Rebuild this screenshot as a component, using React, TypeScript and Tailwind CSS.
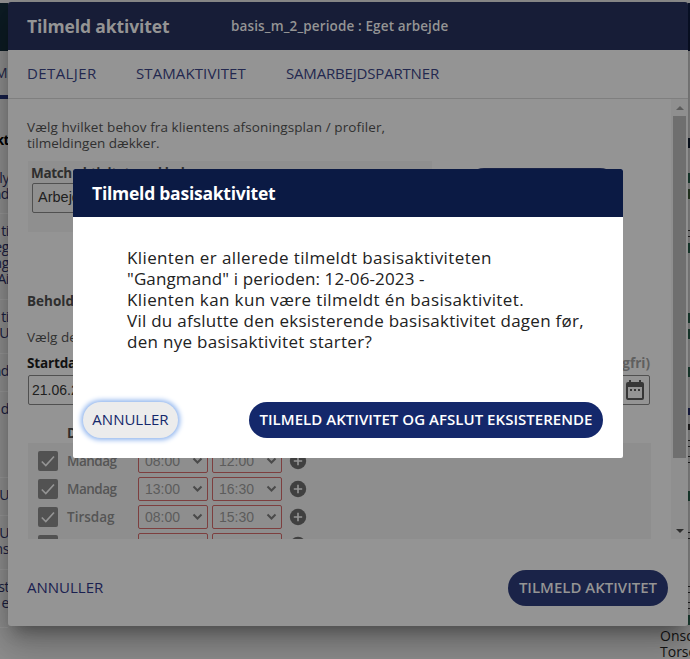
import React from 'react';

const trebuchet = "font-['Trebuchet_MS','Open_Sans','Noto_Sans',sans-serif]";

const tableRows = [
  { h: 'h-[53px]', lines: ['ly', 'nd'] },
  { h: 'h-[86px]', lines: ['ti', 'eg', 'ng', 'Ai'] },
  { h: 'h-[54px]', lines: ['ti', '/U'] },
  { h: 'h-[38px]', lines: ['nd'] },
  { h: 'h-[86px]', lines: ['d'] },
  { h: 'h-[38px]', lines: ['/U'] },
  { h: 'h-[54px]', lines: ['/U', 'ns'] },
  { h: 'h-[58px]', lines: ['st', 'e'] },
];

const scheduleEdge = [
  'mt-[39px] h-[10px] bg-[#0a1320]',
  'mt-[25px] h-[10px] bg-[#1d4034]',
  'mt-[6px] h-[10px] bg-[#2b3d27]',
  'mt-[31px] h-px bg-[#222]',
  'mt-[5px] h-px bg-[#222]',
  'mt-[6px] h-[10px] bg-[#1d4034]',
  'mt-[60px] h-[10px] bg-[#1d4034]',
  'mt-[6px] h-[10px] bg-[#1d4034]',
  'mt-[28px] h-[10px] bg-[#1d4034]',
  'mt-[31px] h-[7px] bg-[#1a1f4a]',
  'mt-[9px] h-[6px] bg-[#222]',
  'mt-[10px] h-px bg-[#222]',
  'mt-[5px] h-px bg-[#222]',
  'mt-[9px] h-px bg-[#222]',
  'mt-[5px] h-px bg-[#222]',
  'mt-[28px] h-[10px] bg-[#1d4034]',
  'mt-[31px] h-px bg-[#222]',
  'mt-[5px] h-px bg-[#222]',
  'mt-[47px] h-px bg-[#222]',
  'mt-[5px] h-px bg-[#222]',
  'mt-[9px] h-px bg-[#222]',
  'mt-[5px] h-px bg-[#222]',
  'mt-[6px] h-[10px] bg-[#1d4034]',
];

const slots = [
  { day: 'Mandag', from: '08:00', to: '12:00', tracking: 'tracking-[-0.5px]' },
  { day: 'Mandag', from: '13:00', to: '16:30', tracking: 'tracking-[-0.5px]' },
  { day: 'Tirsdag', from: '08:00', to: '15:30', tracking: 'tracking-[0px]' },
  { day: 'Onsdag', from: '08:00', to: '15:30', tracking: 'tracking-[-0.3px]' },
];

function PageBehind() {
  return (
    <div className="w-full h-full bg-[#8f8f8f] overflow-hidden">
      <div className="h-12 mt-[3px] flex justify-between">
        <div className="w-4 bg-[#0d1c24]" />
        <div className="flex-1 bg-[#0a1228]" />
      </div>
      <div className="flex justify-between">
        <div className="w-4">
          <div className="h-[44px] flex items-center text-[14px] leading-none text-[#25294a] -ml-[5px]">M</div>
          <div className="h-1 w-4 bg-[#17204a]" />
          <div className="h-[62px] pt-[32px] w-[9px] flex justify-end text-[14px] leading-[18px] tracking-[-0.6px] font-bold text-black">
            kt
          </div>
          {tableRows.map((row, i) => (
            <div key={i} className={`w-2 pt-[9px] border-b border-[#989898] text-[14px] leading-4 text-[#1b2040] ${row.h}`}>
              {row.lines.map((line) => (
                <div key={line} className="w-[9px] h-4 flex justify-end tracking-[-0.4px]">
                  {line}
                </div>
              ))}
            </div>
          ))}
        </div>
        <div className="w-[30px] pt-[48px] flex flex-col whitespace-nowrap">
          {scheduleEdge.map((edge, i) => (
            <div key={i} className={`w-[2px] shrink-0 self-end ${edge}`} />
          ))}
          <div className="mt-[3px] text-[14px] leading-4 text-[#141414]">
            <div>Onsdag</div>
            <div>Torsdag</div>
          </div>
        </div>
      </div>
    </div>
  );
}

function TimeSelect({ value }: { value: string }) {
  return (
    <div className="w-[70px] h-6 shrink-0 border border-[#7d3f3f] rounded-[2px] flex items-center justify-between pl-[6px] pr-[4px]">
      <span className="font-['Liberation_Sans',sans-serif] text-[14px] text-[#5c5c5c]">{value}</span>
      <svg width="11" height="8" viewBox="0 0 11 8" fill="none" stroke="#4a4a4a" strokeWidth="2">
        <path d="M1.5 1.5 5.5 5.5 9.5 1.5" />
      </svg>
    </div>
  );
}

function SlotRow({ day, from, to, tracking }: { day: string; from: string; to: string; tracking: string }) {
  return (
    <div className="h-7 flex items-center pl-[10px]">
      <div className="size-5 rounded-[2px] bg-[#525252] flex items-center justify-center shrink-0">
        <svg width="16" height="14" viewBox="0 0 16 14" fill="none" stroke="#949494" strokeWidth="1.7">
          <path d="M1.8 7.5 5.8 11.5 14 2.5" />
        </svg>
      </div>
      <span className={`w-[71px] ml-[9px] -mt-px text-[13.5px] leading-5 font-semibold text-[#555] ${tracking}`}>{day}</span>
      <TimeSelect value={from} />
      <div className="w-1" />
      <TimeSelect value={to} />
      <svg className="ml-[7px]" width="18" height="18" viewBox="0 0 18 18">
        <circle cx="9" cy="9" r="8.2" fill="#404040" />
        <path d="M9 4.8v8.4M4.8 9h8.4" stroke="#949494" strokeWidth="1.6" />
      </svg>
    </div>
  );
}

function ActivityDialog() {
  return (
    <div className="absolute left-[8px] top-[2px] w-[680px] h-[624px] flex flex-col rounded-[3px] bg-[#949494] shadow-[0_11px_15px_-7px_rgba(0,0,0,0.3),0_24px_38px_3px_rgba(0,0,0,0.16),0_9px_30px_4px_rgba(0,0,0,0.14)]">
      <header className="h-12 shrink-0 rounded-t-[3px] bg-[#171d37] flex items-center pl-[19px] text-[#949494]">
        <h1 className="w-[204px] text-[17.5px] tracking-[-0.12px] font-bold whitespace-nowrap">Tilmeld aktivitet</h1>
        <p className="text-[13.5px] tracking-[0.13px] font-semibold whitespace-nowrap">basis_m_2_periode : Eget arbejde</p>
      </header>
      <nav className="h-[49px] shrink-0 border-b border-[#7f7f7f] flex items-center pl-[19px] pb-[2px] text-[15px] text-[#23284f]">
        <a className="w-[109px] tracking-[0.4px]">DETALJER</a>
        <a className="w-[150px] tracking-[0.1px]">STAMAKTIVITET</a>
        <a className="tracking-[-0.18px]">SAMARBEJDSPARTNER</a>
      </nav>
      <div className="h-[440px] shrink-0 flex overflow-hidden">
        <div className="w-[663px] shrink-0 pl-5 pt-[20px] pr-[20px]">
          <p className="-ml-px text-[13.5px] leading-4 text-[#303030]">
            <span className="tracking-[0.1px]">Vælg hvilket behov fra klientens afsoningsplan / profiler,</span>
            <br />
            tilmeldingen dækker.
          </p>
          <div className="flex mt-[10px]">
            <div className="w-[404px] h-[71px] bg-[#8f8f8f] pl-1 pt-1">
              <div className="-ml-px text-[13.5px] leading-[17px] tracking-[-0.35px] font-bold text-[#2e2e2e]">Match aktivitet med behov</div>
              <div className="mt-px w-[380px] h-[30px] border border-[#505050] rounded-[2px] flex items-center pl-[5px] font-['Liberation_Sans',sans-serif] text-[14.5px] text-[#202020]">
                Arbejde
              </div>
            </div>
            <div className="ml-[34px] mt-[7px] w-[152px] h-9 rounded-full bg-[#1a2348]" />
          </div>
          <div className="mt-[60px] -ml-px text-[13.5px] leading-[18px] font-bold text-[#2e2e2e]">Behold</div>
          <div className="mt-[18px] -ml-px text-[13.5px] leading-[18px] text-[#303030]">Vælg de</div>
          <div className="mt-[8px] -ml-px flex justify-between text-[13.5px] leading-[18px] font-bold w-[623px]">
            <span className="text-[#111] tracking-[-0.15px]">Startdato</span>
            <span className="text-[#5f5f5f]">(valgfri)</span>
          </div>
          <div className="mt-[3px] flex justify-between w-[622px]">
            <div className="w-[200px] h-[30px] border border-[#505050] rounded-[2px] flex items-center pl-[3px] font-['Liberation_Sans',sans-serif] text-[14px] text-[#202020]">
              21.06.2023
            </div>
            <div className="w-[200px] h-[30px] border border-[#505050] rounded-[2px] flex items-center justify-end pr-[5px]">
              <svg width="18" height="20" viewBox="0 0 18 20">
                <path
                  fill="#363636"
                  fillRule="evenodd"
                  d="M3 0h2v2h8V0h2v2h1a2 2 0 0 1 2 2v14a2 2 0 0 1-2 2H2a2 2 0 0 1-2-2V4a2 2 0 0 1 2-2h1zM2 7v11h14V7zM4 9h2v2H4zM8 9h2v2H8zM12 9h2v2h-2z"
                />
              </svg>
            </div>
          </div>
          <div className="mt-[19px] pl-[39px] h-[19px] text-[13.5px] leading-[18px] font-bold text-[#2e2e2e]">Dag</div>
          <div className="w-[623px] pt-1 h-[110px] bg-[#8e8e8e]">
            {slots.map((s, i) => (
              <SlotRow key={i} {...s} />
            ))}
          </div>
        </div>
        <div className="w-[17px] bg-[#8f8f8f] flex flex-col items-center justify-between">
          <div className="h-[17px] flex items-center">
            <div className="border-x-4 border-x-transparent border-b-4 border-b-[#5c5c5c]" />
          </div>
          <div className="w-[13px] h-[342px] bg-[#6f6f6f]" />
          <div className="flex-1" />
          <div className="h-[17px] flex items-center">
            <div className="border-x-4 border-x-transparent border-t-4 border-t-[#2e2e2e]" />
          </div>
        </div>
      </div>
      <footer className="flex-1 flex items-center justify-between pl-[19px] pr-5 pb-[1px] pt-[12px]">
        <span className="text-[15px] text-[#1a2050] pb-[2px]">ANNULLER</span>
        <div className="w-[160px] h-9 rounded-full bg-[#1a2348] flex items-center justify-center pb-[2px] text-[15px] font-semibold text-[#949494] whitespace-nowrap">
          TILMELD AKTIVITET
        </div>
      </footer>
    </div>
  );
}

function ConfirmDialog() {
  return (
    <div className="absolute left-[73px] top-[169px] w-[550px] h-[289px] flex flex-col bg-white rounded-[2px] overflow-hidden">
      <header className="h-12 shrink-0 bg-[#0b1a44] flex items-center pl-[19px] text-[17.5px] tracking-[-0.25px] font-bold text-white">
        Tilmeld basisaktivitet
      </header>
      <div className="pt-[30px] pl-[54px] text-[17px] leading-[21px] text-[#222] whitespace-nowrap">
        <p className="tracking-[0.38px]">Klienten er allerede tilmeldt basisaktiviteten</p>
        <p className="tracking-[0.12px]">"Gangmand" i perioden: 12-06-2023 -</p>
        <p className="tracking-[0.38px]">Klienten kan kun være tilmeldt én basisaktivitet.</p>
        <p className="tracking-[0.26px]">Vil du afslutte den eksisterende basisaktivitet dagen før,</p>
        <p className="tracking-[0.29px]">den nye basisaktivitet starter?</p>
      </div>
      <div className="mt-auto mb-5 pl-[10px] pr-5 flex justify-between">
        <button className="w-[95px] h-9 pb-[2px] rounded-full bg-[#ececec] text-[15px] text-[#14286b] shadow-[0_0_5px_2px_#8fb4ee]">
          ANNULLER
        </button>
        <button className="w-[354px] h-9 pb-[2px] rounded-full bg-[#14286b] text-[15px] tracking-[0.04px] font-semibold text-white whitespace-nowrap">
          TILMELD AKTIVITET OG AFSLUT EKSISTERENDE
        </button>
      </div>
    </div>
  );
}

export default function App() {
  return (
    <div className={`relative flow-root w-[690px] h-[659px] overflow-hidden ${trebuchet}`}>
      <PageBehind />
      <ActivityDialog />
      <ConfirmDialog />
    </div>
  );
}
